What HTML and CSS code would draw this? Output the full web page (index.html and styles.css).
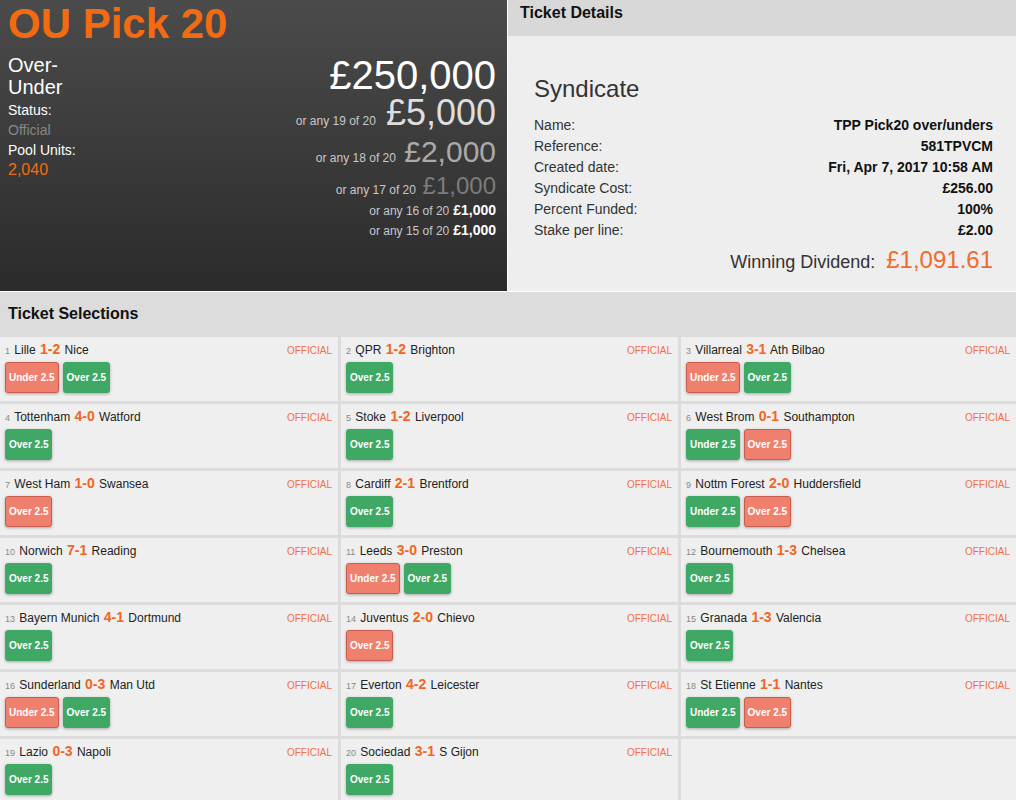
FILE: index.html
```html
<!DOCTYPE html>
<html lang="en">
<head>
  <meta charset="UTF-8">
  <title>OU Pick 20 | Ticket</title>
  <link rel="stylesheet" href="styles.css">
</head>
<body>

  <div class="top">
    <div class="pool-box">
      <h1>OU Pick 20</h1>
      <div class="pool-row">
        <div class="pool-info">
          <div class="pool-type">Over-Under</div>
          <div class="info-line">Status:</div>
          <div class="info-line muted">Official</div>
          <div class="info-line">Pool Units:</div>
          <div class="info-line units">2,040</div>
        </div>
        <div class="prizes">
          <div class="prize p1">£250,000</div>
          <div class="prize p2"><span class="any">or any 19 of 20</span> £5,000</div>
          <div class="prize p3"><span class="any">or any 18 of 20</span> £2,000</div>
          <div class="prize p4"><span class="any">or any 17 of 20</span> £1,000</div>
          <div class="prize p5"><span class="any">or any 16 of 20</span> £1,000</div>
          <div class="prize p5"><span class="any">or any 15 of 20</span> £1,000</div>
        </div>
      </div>
    </div>

    <div class="details-box">
      <div class="bar">Ticket Details</div>
      <div class="details">
        <h2>Syndicate</h2>
        <div class="detail-row"><span>Name:</span><strong>TPP Pick20 over/unders</strong></div>
        <div class="detail-row"><span>Reference:</span><strong>581TPVCM</strong></div>
        <div class="detail-row"><span>Created date:</span><strong>Fri, Apr 7, 2017 10:58 AM</strong></div>
        <div class="detail-row"><span>Syndicate Cost:</span><strong>£256.00</strong></div>
        <div class="detail-row"><span>Percent Funded:</span><strong>100%</strong></div>
        <div class="detail-row"><span>Stake per line:</span><strong>£2.00</strong></div>
        <div class="dividend">Winning Dividend: <span>£1,091.61</span></div>
      </div>
    </div>
  </div>

  <div class="bar selections-bar">Ticket Selections</div>
  <div class="selections" id="selections"></div>

  <script>
    // [home, score, away, picks] - pick is "U" or "O", lowercase = lost
    const games = [
      ["Lille", "1-2", "Nice", ["u", "O"]],
      ["QPR", "1-2", "Brighton", ["O"]],
      ["Villarreal", "3-1", "Ath Bilbao", ["u", "O"]],
      ["Tottenham", "4-0", "Watford", ["O"]],
      ["Stoke", "1-2", "Liverpool", ["O"]],
      ["West Brom", "0-1", "Southampton", ["U", "o"]],
      ["West Ham", "1-0", "Swansea", ["o"]],
      ["Cardiff", "2-1", "Brentford", ["O"]],
      ["Nottm Forest", "2-0", "Huddersfield", ["U", "o"]],
      ["Norwich", "7-1", "Reading", ["O"]],
      ["Leeds", "3-0", "Preston", ["u", "O"]],
      ["Bournemouth", "1-3", "Chelsea", ["O"]],
      ["Bayern Munich", "4-1", "Dortmund", ["O"]],
      ["Juventus", "2-0", "Chievo", ["o"]],
      ["Granada", "1-3", "Valencia", ["O"]],
      ["Sunderland", "0-3", "Man Utd", ["u", "O"]],
      ["Everton", "4-2", "Leicester", ["O"]],
      ["St Etienne", "1-1", "Nantes", ["U", "o"]],
      ["Lazio", "0-3", "Napoli", ["O"]],
      ["Sociedad", "3-1", "S Gijon", ["O"]]
    ];

    const list = document.getElementById("selections");

    games.forEach((g, i) => {
      const picks = g[3].map(p => {
        const label = p.toUpperCase() === "U" ? "Under 2.5" : "Over 2.5";
        const cls = p === p.toUpperCase() ? "won" : "lost";
        return `<span class="pick ${cls}">${label}</span>`;
      }).join("");

      const cell = document.createElement("div");
      cell.className = "game";
      cell.innerHTML = `
        <div class="game-line">
          <span class="num">${i + 1}</span>
          ${g[0]} <b class="score">${g[1]}</b> ${g[2]}
          <span class="status">OFFICIAL</span>
        </div>
        <div class="picks">${picks}</div>
      `;
      list.appendChild(cell);
    });

    // empty filler cell
    const filler = document.createElement("div");
    filler.className = "game";
    list.appendChild(filler);
  </script>
</body>
</html>
```

FILE: styles.css
```css
body {
  margin: 0;
  background-color: #fff;
  color: #222;
  font-family: "Liberation Sans", Arial, sans-serif;
  font-size: 14px;
}

.top {
  display: grid;
  grid-template-columns: 507px 1fr;
  gap: 1px;
  height: 291px;
  margin-bottom: 1px;
}

/* pool panel */
.pool-box {
  background: linear-gradient(#4b4b4b, #2b2b2b);
  color: #fff;
  padding: 3px 11px 0 8px;
}

h1 {
  margin: 0;
  color: #f26b12;
  font-size: 42px;
  line-height: 42px;
}

.pool-row {
  display: flex;
  margin-top: 9px;
}

.pool-info {
  width: 100px;
}

.pool-type {
  width: 70px;
  font-size: 20px;
  line-height: 22px;
  margin-bottom: 2px;
}

.info-line {
  line-height: 20px;
}

.muted {
  color: #888;
}

.units {
  color: #f26b12;
  font-size: 16px;
}

.prizes {
  flex: 1;
  text-align: right;
  margin-top: 1px;
}

.prize {
  white-space: nowrap;
}

.any {
  font-size: 12px;
  line-height: 1;
  color: #c8c8c8;
}

.p1 { font-size: 40px; line-height: 40px; }
.p2 { font-size: 36px; line-height: 36px; color: #dedede; }
.p3 { font-size: 30px; line-height: 41px; color: #aaa; }
.p4 { font-size: 24px; line-height: 28px; color: #7c7c7c; }
.p5 { font-size: 14px; line-height: 20px; font-weight: bold; }
.p5 .any { font-weight: normal; }

/* ticket details */
.details-box {
  background-color: #eee;
}

.bar {
  background-color: #d8d8d8;
  color: #111;
  font-size: 16px;
  font-weight: bold;
  height: 36px;
  box-sizing: border-box;
  padding: 3px 12px;
  line-height: 20px;
}

.details {
  padding: 39px 23px 0 26px;
}

h2 {
  margin: 0 0 12px;
  color: #333;
  font-size: 24px;
  font-weight: normal;
  line-height: 28px;
}

.detail-row {
  display: flex;
  justify-content: space-between;
  line-height: 21px;
  color: #333;
}

.detail-row strong {
  color: #111;
}

.dividend {
  margin-top: 4px;
  text-align: right;
  color: #333;
  font-size: 18px;
  line-height: 30px;
}

.dividend span {
  margin-left: 6px;
  color: #f26b2a;
  font-size: 24px;
}

/* selections */
.selections-bar {
  height: 44px;
  line-height: 44px;
  padding: 0 8px;
  background-color: #dcdcdc;
}

.selections {
  display: grid;
  grid-template-columns: 338px 337px 1fr;
  gap: 3px;
  padding-top: 1px;
  background-color: #dcdcdc;
}

.game {
  background-color: #efefef;
  height: 64px;
  box-sizing: border-box;
  padding: 3px 5px 0 5px;
}

.game-line {
  height: 20px;
  font-size: 12px;
  line-height: 20px;
  color: #222;
}

.num {
  font-size: 9px;
  line-height: 1;
  color: #888;
  margin-right: 1px;
}

.score {
  color: #f26522;
  font-size: 14px;
  line-height: 1;
  margin: 0 1px;
}

.status {
  float: right;
  color: #f0703f;
  font-size: 10px;
  margin: 1px 1px 0 0;
}

.picks {
  display: flex;
  gap: 4px;
  margin-top: 2px;
}

.pick {
  height: 31px;
  box-sizing: border-box;
  line-height: 29px;
  padding: 0 3px;
  border: 1px solid;
  border-radius: 3px;
  color: #fff;
  font-size: 10px;
  font-weight: bold;
  box-shadow: 0 1px 3px rgba(0, 0, 0, 0.3);
}

.won {
  background-color: #3ea864;
  border-color: #3ea864;
}

.lost {
  background-color: #f0806e;
  border-color: #c95d4d;
}
```
